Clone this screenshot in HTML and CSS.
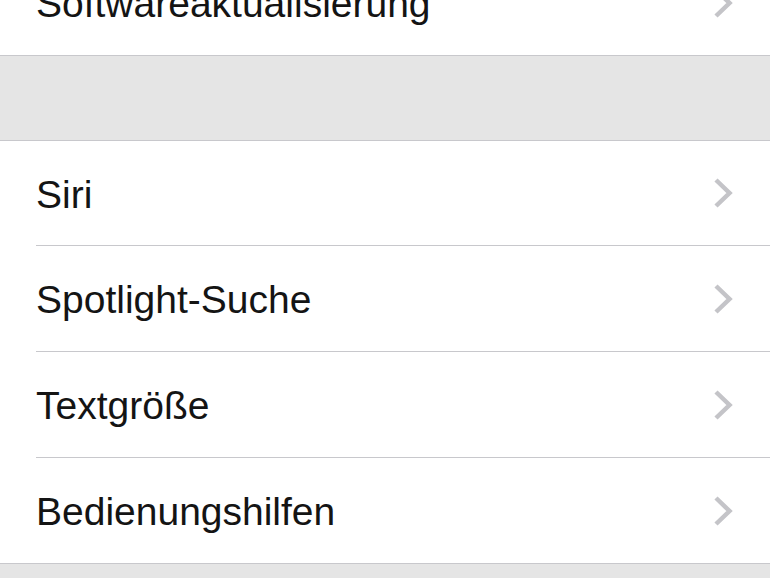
FILE: index.html
```html
<!DOCTYPE html>
<html lang="de">
<head>
<meta charset="utf-8">
<title>Einstellungen – Allgemein</title>
<link rel="stylesheet" href="styles.css">
</head>
<body>
<div class="screen">
  <div class="group group-first">
    <div class="row"><div class="row-inner"><span class="label">Softwareaktualisierung</span><svg class="chev" viewBox="0 0 20 32" width="20" height="32"><polyline points="3,3 16.5,16 3,29"/></svg></div></div>
  </div>
  <div class="spacer"></div>
  <div class="group">
    <div class="row"><div class="row-inner"><span class="label">Siri</span><svg class="chev" viewBox="0 0 20 32" width="20" height="32"><polyline points="3,3 16.5,16 3,29"/></svg></div></div>
    <div class="row"><div class="row-inner"><span class="label">Spotlight-Suche</span><svg class="chev" viewBox="0 0 20 32" width="20" height="32"><polyline points="3,3 16.5,16 3,29"/></svg></div></div>
    <div class="row"><div class="row-inner"><span class="label">Textgröße</span><svg class="chev" viewBox="0 0 20 32" width="20" height="32"><polyline points="3,3 16.5,16 3,29"/></svg></div></div>
    <div class="row"><div class="row-inner"><span class="label">Bedienungshilfen</span><svg class="chev" viewBox="0 0 20 32" width="20" height="32"><polyline points="3,3 16.5,16 3,29"/></svg></div></div>
  </div>
  <div class="spacer"></div>
</div>
</body>
</html>
```
FILE: styles.css
```css
html, body {
  margin: 0;
  padding: 0;
  background: #e5e5e5;
  overflow: hidden;
}

.screen {
  width: 770px;
  font-family: "Liberation Sans", Arial, Helvetica, sans-serif;
  color: #141414;
}

.group {
  background: #ffffff;
  border-top: 1px solid #c8c8cc;
  border-bottom: 1px solid #c8c8cc;
}

.group-first {
  margin-top: -51px;
}

.spacer {
  height: 84px;
  background: #e5e5e5;
}

.row {
  padding-left: 36px;
}

.row-inner {
  height: 105px;
  box-sizing: border-box;
  padding: 3px 37px 0 0;
  display: flex;
  align-items: center;
  justify-content: space-between;
  border-bottom: 1px solid #c8c8cc;
}

.row + .row .row-inner {
  height: 106px;
}

.row:last-child .row-inner {
  border-bottom: none;
  height: 105px;
}

.label {
  font-size: 39px;
}

.chev {
  display: block;
  margin-top: -3px;
}

.chev polyline {
  fill: none;
  stroke: #c4c4c8;
  stroke-width: 4.5;
  stroke-linejoin: miter;
  stroke-linecap: butt;
}
```
